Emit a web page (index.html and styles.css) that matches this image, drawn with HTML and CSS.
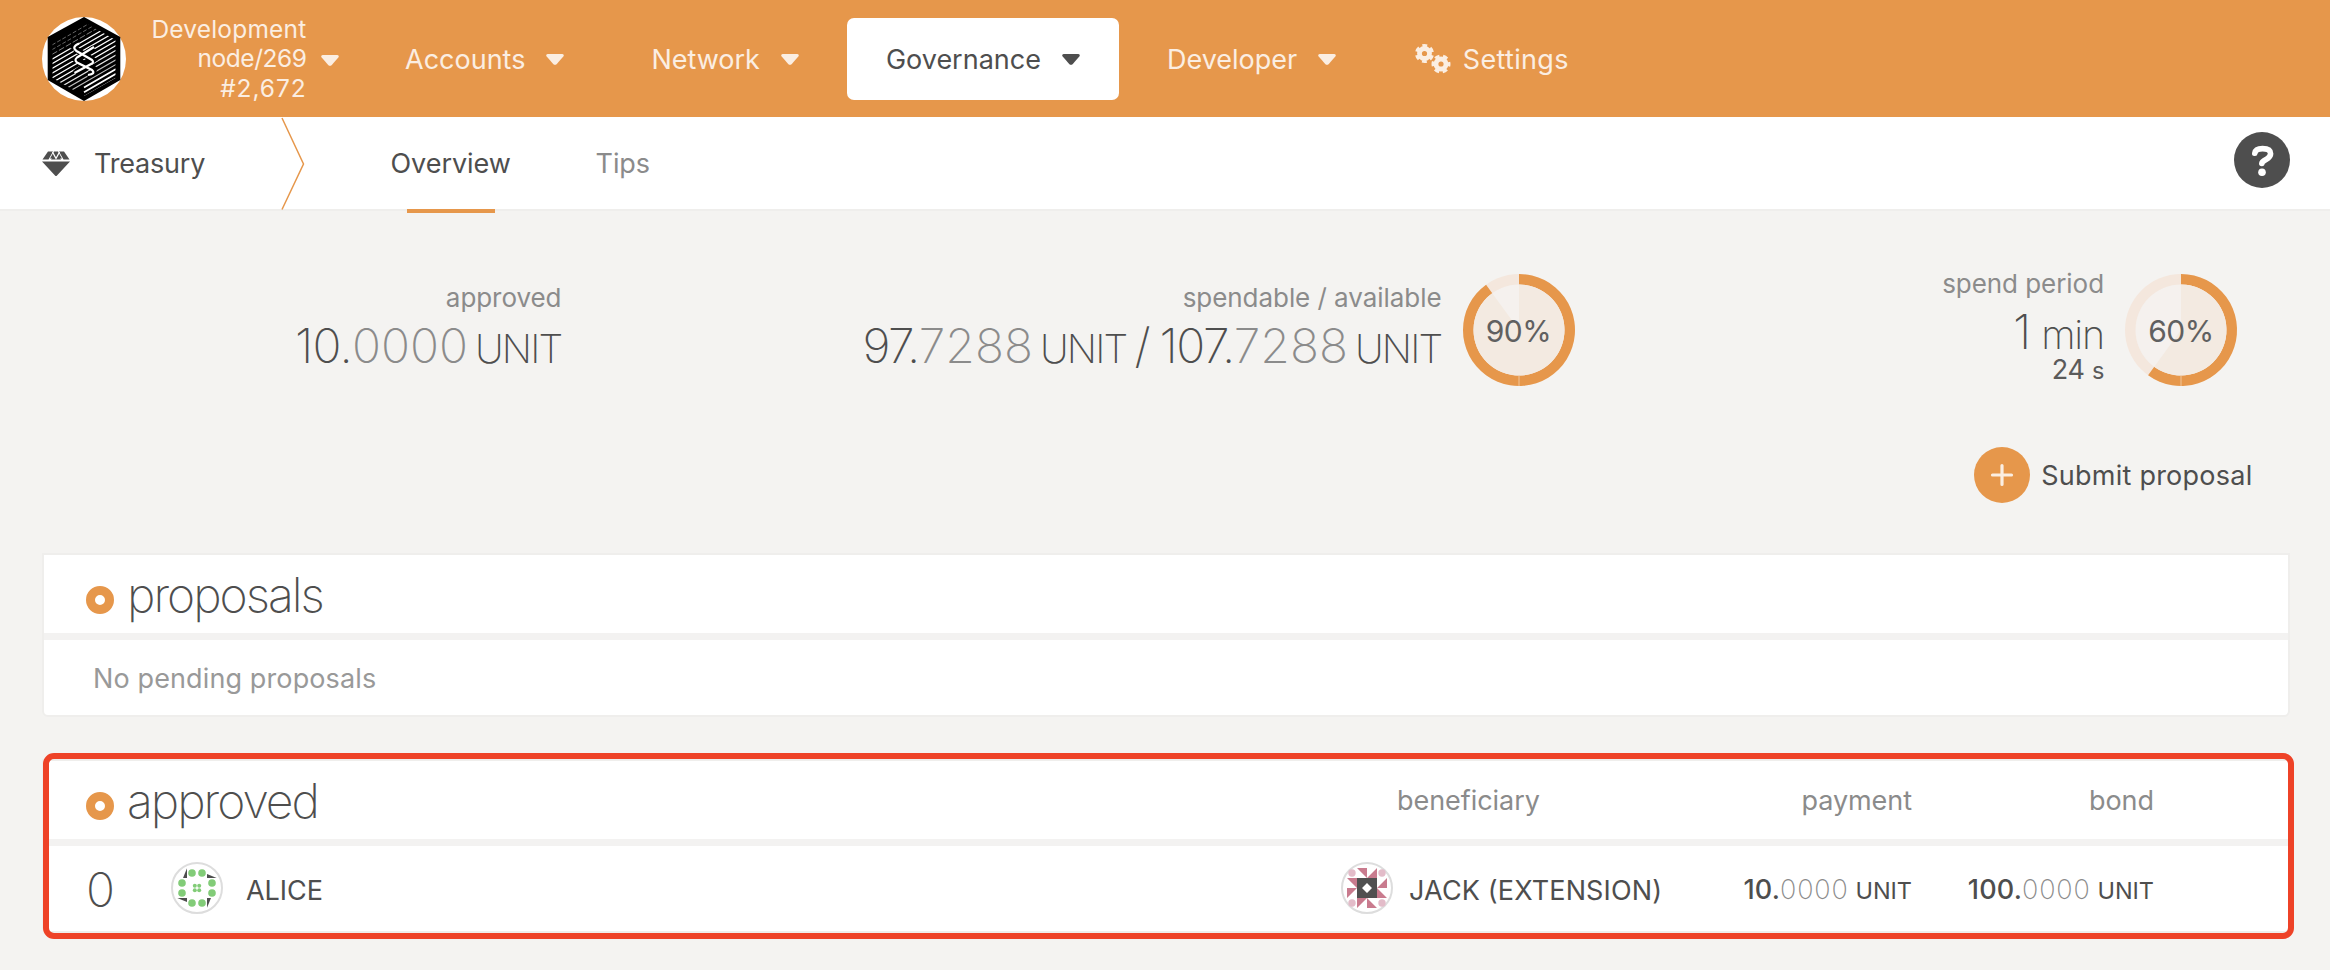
FILE: index.html
```html
<!DOCTYPE html>
<html lang="en">
<head>
<meta charset="utf-8">
<title>Treasury</title>
<link rel="stylesheet" href="styles.css">
</head>
<body>
<svg width="0" height="0" class="defs">
  <defs>
    <symbol id="caret" viewBox="0 0 18 11"><path d="M1.6 0H16.4Q18.6 .4 17.3 2.6L10.8 9.9Q9 11.6 7.2 9.9L.7 2.6Q-.6 .4 1.6 0Z" fill="currentColor"/></symbol>
    <clipPath id="hex"><path d="M42 5L73.500 23V61L42 79L10.500 61V23Z"/></clipPath>
  </defs>
</svg>
<header class="topbar">
  <svg class="logo" width="84" height="84" viewBox="0 0 84 84">
    <circle cx="42" cy="42" r="42" fill="#fff"/>
    <path d="M42 0L78.300 20V63L42 84L5.700 63V20Z" fill="#000"/>
    <g clip-path="url(#hex)" stroke="#fff" fill="none">
      <path d="M10 28L74 -9M10 32.700L74 -4.300" stroke-width="1" stroke-dasharray="4 2" opacity=".4"/>
      <path d="M10 37.400L74 .4" stroke-width="1" opacity=".5" stroke-dasharray="6 2"/>
      <path d="M10 42.100L74 5.100M10 46.800L74 9.800M10 51.500L74 14.500M10 56.200L74 19.200M10 60.900L74 23.900M10 65.600L74 28.600" stroke-width="1.250"/>
      <path d="M10 70.300L74 33.300M10 75L74 38" stroke-width="1.250" opacity=".9"/>
      <path d="M10 79.700L74 42.700M10 84.400L74 47.400" stroke-width="1.200" opacity=".75"/>
      <path d="M42 70.500L74 52M42 75.200L74 56.700M42 79.900L74 61.400" stroke-width="1.700"/>
    </g>
    <path d="M31 32Q32 28 36 27M33 32L51 43L33 56M52 31L35 43L52 52Q52 58 46 57" fill="none" stroke="#000" stroke-width="6"/>
    <path d="M37 26.500Q29 30 34.500 34L50 43Q52 45 50 46.500L32.500 56M52 30L35 40.500Q32 43 35 45.500L50 53Q54 57 46 58" fill="none" stroke="#fff" stroke-width="2.200"/>
  </svg>
  <div class="chain"><span>Development</span><span class="node">node/269</span><span class="block">#2,672</span></div>
  <svg class="caret chain-caret"><use href="#caret"/></svg>
  <nav class="nav">
    <a class="nav-item">Accounts<svg class="caret"><use href="#caret"/></svg></a>
    <a class="nav-item">Network<svg class="caret"><use href="#caret"/></svg></a>
    <a class="nav-item active">Governance<svg class="caret"><use href="#caret"/></svg></a>
    <a class="nav-item">Developer<svg class="caret"><use href="#caret"/></svg></a>
    <a class="nav-item settings">
      <svg width="35" height="30" viewBox="0 0 35 30" fill="none" stroke="currentColor">
        <circle cx="9.500" cy="9.500" r="5" stroke-width="4.800"/>
        <circle cx="9.500" cy="9.500" r="7.800" stroke-width="3.400" stroke-dasharray="4.600 3.568" stroke-dashoffset="-1.800"/>
        <circle cx="26" cy="20" r="5" stroke-width="4.800"/>
        <circle cx="26" cy="20" r="7.800" stroke-width="3.400" stroke-dasharray="4.600 3.568" stroke-dashoffset="2.300"/>
      </svg>Settings</a>
  </nav>
</header>
<div class="tabs">
  <svg class="gem" width="28" height="25" viewBox="0 0 28 25" fill="#4e4e4e"><path d="M6 .5H11L6.500 8.500H.5ZM9 8.500L14 1.500L19 8.500ZM17 .5H22L27.500 8.500H21.500ZM0 10.500H28L15 24.500Q14 25.500 13 24.500Z"/><path d="M12 .5H16L20 7.500H8Z"/><path d="M10.500 1L14 7.500L17.500 1" fill="none" stroke="#fff" stroke-width="1.300"/></svg>
  <span class="section">Treasury</span>
  <svg class="chevron" width="24" height="92" viewBox="0 0 24 92"><path d="M1 1L22.500 47L1 92.500" fill="none" stroke="#e6974b" stroke-width="1.500"/></svg>
  <a class="tab current">Overview</a>
  <a class="tab">Tips</a>
  <svg class="help" width="56" height="56" viewBox="0 0 56 56"><circle cx="28" cy="28" r="28" fill="#4e4e4e"/><path d="M20.800 21.300Q21.500 16.600 28.500 16.600Q36.600 16.600 36.600 21.800Q36.600 25 32 27.600Q27.800 29.800 27.800 31.500" fill="none" stroke="#fff" stroke-width="5.600" stroke-linecap="round" stroke-linejoin="round"/><circle cx="28" cy="40.300" r="3.800" fill="#fff"/></svg>
</div>
<main>
  <section class="summary">
    <div class="stat stat-approved">
      <div class="label">approved</div>
      <div class="value"><span class="int">10.</span><span class="frac">0000</span><span class="unit">UNIT</span></div>
    </div>
    <div class="stat stat-available">
      <div class="label">spendable / available</div>
      <div class="value"><span class="int">97.</span><span class="frac">7288</span><span class="unit">UNIT</span><span class="slash">/</span><span class="int">107.</span><span class="frac">7288</span><span class="unit">UNIT</span></div>
    </div>
    <div class="gauge">
      <svg width="112" height="112" viewBox="0 0 112 112"><circle cx="56" cy="56" r="56" fill="#f4e7dd"/><path d="M56 56V0A56 56 0 1 1 23.080 10.690Z" fill="#e6974b"/><circle cx="56" cy="56" r="45.500" fill="#f5f1ee"/><path d="M56 56V10.500A45.500 45.500 0 1 1 29.260 19.190Z" fill="#f3eae1"/><path d="M56 101.500V112" stroke="#f0c59b"/></svg>
      <span>90%</span>
    </div>
    <div class="stat stat-period">
      <div class="label">spend period</div>
      <div class="value"><span>1</span><span class="unit min">min</span></div>
      <div class="rest">24 <small>s</small></div>
    </div>
    <div class="gauge">
      <svg width="112" height="112" viewBox="0 0 112 112"><circle cx="56" cy="56" r="56" fill="#f4e7dd"/><path d="M56 56V0A56 56 0 1 1 23.080 101.300Z" fill="#e6974b"/><circle cx="56" cy="56" r="45.500" fill="#f5f1ee"/><path d="M56 56V10.500A45.500 45.500 0 1 1 29.260 92.810Z" fill="#f3eae1"/><path d="M56 101.500V112" stroke="#f0c59b"/></svg>
      <span>60%</span>
    </div>
  </section>
  <div class="actions">
    <svg width="56" height="56" viewBox="0 0 56 56"><circle cx="28" cy="28" r="28" fill="#e6974b"/><path d="M28 18.500V37.500M18.500 28H37.500" stroke="#fbeee2" stroke-width="3.200" stroke-linecap="round"/></svg>
    <span>Submit proposal</span>
  </div>
  <section class="table">
    <div class="head"><i class="ring"></i><h1>proposals</h1></div>
    <div class="row empty">No pending proposals</div>
  </section>
  <section class="table highlighted">
    <div class="head cols">
      <div class="title"><i class="ring"></i><h1>approved</h1></div>
      <span class="th ben">beneficiary</span><span class="th num">payment</span><span class="th num">bond</span>
    </div>
    <div class="row cols">
      <div class="who"><span class="index">0</span>
        <svg width="52" height="52" viewBox="-26 -26 52 52">
          <circle r="25" fill="#fff" stroke="#ddd" stroke-width="2"/>
          <g fill="#4e4e4e"><path d="M-10 -10V-19.700L-14 -10Z"/><path d="M10 -10V-14L19.700 -10Z"/><path d="M10 10V19.700L14 10Z"/><path d="M-10 10V14L-19.700 10Z"/></g>
          <g fill="#82cc78"><circle cx="-5" cy="-15" r="3.800"/><circle cx="5" cy="-15" r="3.800"/><circle cx="-5" cy="15" r="3.800"/><circle cx="5" cy="15" r="3.800"/><circle cx="-15" cy="-5" r="3.800"/><circle cx="-15" cy="5" r="3.800"/><circle cx="15" cy="-5" r="3.800"/><circle cx="15" cy="5" r="3.800"/><circle cx="-2.200" cy="-2.200" r="2"/><circle cx="2.200" cy="-2.200" r="2"/><circle cx="-2.200" cy="2.200" r="2"/><circle cx="2.200" cy="2.200" r="2"/></g>
        </svg>
        <span class="name">ALICE</span></div>
      <div class="payee">
        <svg width="52" height="52" viewBox="-26 -26 52 52">
          <circle r="25" fill="#fff" stroke="#ddd" stroke-width="2"/>
          <g fill="#e3bcc9"><circle cx="-15" cy="-15" r="3.700"/><circle cx="15" cy="-15" r="3.700"/><circle cx="-15" cy="15" r="3.700"/><circle cx="15" cy="15" r="3.700"/></g>
          <g fill="#c97b8e"><path d="M-10 -20H0V-10ZM10 -20V-10H0Z"/><path d="M20 -10V0H10ZM20 10H10V0Z"/><path d="M10 20H0V10ZM-10 20V10H0Z"/><path d="M-20 10V0H-10ZM-20 -10H-10V0Z"/></g>
          <path d="M-10 -10H10V10H-10ZM0 -5L-5 0L0 5L5 0Z" fill="#505050" fill-rule="evenodd"/>
        </svg>
        <span class="name">JACK (EXTENSION)</span></div>
      <div class="amount"><b>10.</b><span class="frac">0000</span><small>UNIT</small></div>
      <div class="amount"><b>100.</b><span class="frac">0000</span><small>UNIT</small></div>
    </div>
  </section>
</main>
</body>
</html>
```
FILE: styles.css
```css
* { box-sizing: border-box; }
body {
  margin: 0;
  width: 2330px;
  height: 970px;
  overflow: hidden;
  background: #f4f3f1;
  color: #4e4e4e;
  font-family: Inter, "Liberation Sans", sans-serif;
  font-size: 27px;
  font-weight: 440;
  letter-spacing: -.05px;
  white-space: nowrap;
}
svg { display: block; flex: none; overflow: visible; }
.defs { position: absolute; }

.topbar {
  display: flex;
  align-items: center;
  height: 117px;
  padding-left: 42px;
  background: #e6974b;
  color: #fbeee2;
}
.chain {
  display: flex;
  flex-direction: column;
  align-items: flex-end;
  width: 180.500px;
  padding-top: 1px;
  font-size: 24.5px;
  line-height: 29.5px;
  letter-spacing: .2px;
}
.node { letter-spacing: -.45px; }
.block { letter-spacing: .9px; }
.caret { width: 18px; height: 11px; margin: 3px 0 0 21px; }
.chain-caret { margin-left: 14px; }
.nav { display: flex; gap: 9px; margin-left: 27.500px; letter-spacing: 0; }
.nav-item {
  display: flex;
  align-items: center;
  height: 82px;
  padding: 1px 39px 0;
  border-radius: 7px;
}
.nav-item.active { background: #fff; color: #4e4e4e; }
.nav-item.settings { padding-left: 30.500px; gap: 13px; letter-spacing: .35px; }
.nav .caret { margin-top: 1px; }

.tabs {
  display: flex;
  align-items: center;
  height: 94px;
  padding-left: 42px;
  border-bottom: 2px solid #efeeec;
  background: #fff;
}
.section { width: 187px; margin-left: 24px; letter-spacing: -.2px; }
.tab {
  position: relative;
  width: 124px;
  margin-left: 85.500px;
  padding-top: 2px;
  color: #8b8b8b;
  line-height: 92px;
}
.tab.current { color: #4e4e4e; }
.tab.current::after {
  content: "";
  position: absolute;
  left: 16.500px;
  bottom: -3px;
  width: 88px;
  height: 4px;
  background: #e6974b;
}
.tab + .tab { margin-left: 81px; }
.help { margin: -7px 40px 0 auto; }

.summary { display: flex; height: 236px; padding-top: 63px; }
.stat { text-align: right; }
.stat-approved { width: 561.500px; padding-top: 7px; }
.stat-available { width: 880px; padding-top: 7px; }
.stat-period { width: 529.500px; margin-top: -7px; }
.label { font-size: 26px; line-height: 34px; color: #8b8b8b; letter-spacing: -.05px; }
.value {
  display: flex;
  justify-content: flex-end;
  align-items: baseline;
  height: 62px;
  font-size: 48px;
  line-height: 62px;
  font-weight: 200;
  letter-spacing: 0;
}
.int { letter-spacing: -1.500px; }
.stat-approved .int { letter-spacing: -.8px; }
.frac { color: #8b8b8b; }
.unit { margin-left: 7px; font-size: 39.500px; letter-spacing: -1.800px; }
.min { margin-left: 10px; letter-spacing: -1.200px; }
.slash { margin: 0 9px 0 8px; }
.stat-period .value { height: 52px; line-height: 52px; margin-top: 5px; }
.rest { line-height: 24px; color: #5a5a5a; letter-spacing: -.3px; }
.rest small { font-size: 23.500px; }
.gauge { position: relative; width: 112px; height: 112px; margin-left: 21px; }
.gauge span {
  position: absolute;
  inset: 0;
  font-size: 30px;
  line-height: 114px;
  letter-spacing: -.5px;
  text-align: center;
  color: #606060;
}

.actions { display: flex; align-items: center; gap: 11px; width: 2252.500px; justify-content: flex-end; }
.actions span { letter-spacing: .25px; }

.table {
  position: relative;
  margin: 50px 40px 0 42px;
  border: 2px solid #efeeec;
  border-radius: 0 0 6px 6px;
  background: #fff;
}
.head {
  display: flex;
  align-items: center;
  height: 85px;
  padding-left: 42px;
  border-bottom: 7px solid #f3f2f1;
}
h1 {
  margin: 0 0 0 13px;
  padding-top: 1px;
  font-size: 48px;
  font-weight: 200;
  line-height: 60px;
  letter-spacing: -2px;
}
.ring {
  width: 28px;
  height: 28px;
  margin-top: 11px;
  border: 9px solid #e6974b;
  border-radius: 50%;
}
.row { height: 75px; }
.empty { padding-left: 49px; line-height: 78px; color: #999; letter-spacing: .12px; }
.highlighted { margin-top: 42px; }
.highlighted::after {
  content: "";
  position: absolute;
  inset: -8px -6px -8px -1px;
  border: 6px solid #ee4227;
  border-radius: 11px;
}
.cols {
  display: grid;
  grid-template-columns: 1297px 340px 231px 242px;
  align-items: center;
}
.highlighted .head { padding: 0; }
.highlighted .row { height: 85px; padding-bottom: 1px; }
.title { display: flex; align-items: center; padding-left: 42px; }
.th { color: #8b8b8b; }
.ben { padding-left: 56px; }
.num { text-align: right; }
.who, .payee { display: flex; align-items: center; }
.index { width: 85px; margin-top: 3px; font-size: 48px; font-weight: 200; line-height: 58px; }
.who { padding-left: 42px; }
.name { margin-left: 23px; padding-top: 4px; }
.payee .name { margin-left: 16px; letter-spacing: .15px; }
.amount { display: flex; justify-content: flex-end; align-items: baseline; padding-top: 2px; }
.amount b { font-weight: 500; letter-spacing: .2px; }
.amount .frac { font-weight: 200; letter-spacing: .8px; }
.amount small { margin-left: 7px; font-size: 23.500px; }
```
